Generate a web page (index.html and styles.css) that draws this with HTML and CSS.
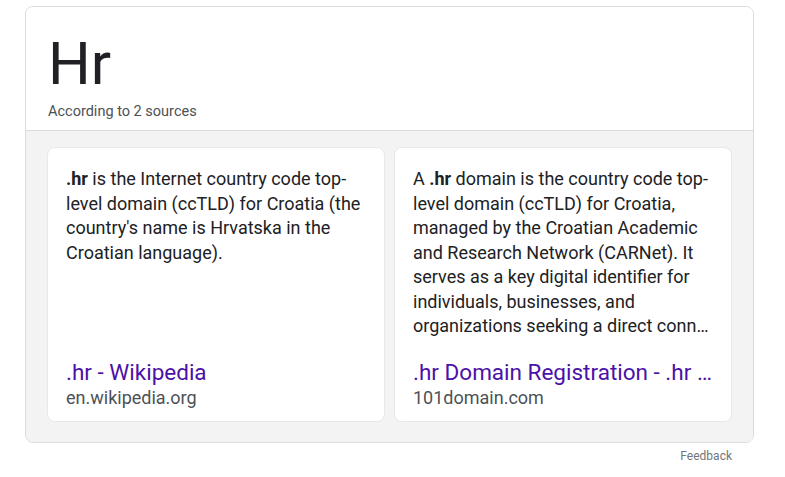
FILE: index.html
```html
<!DOCTYPE html>
<html>
<head>
<meta charset="utf-8">
<link rel="stylesheet" href="styles.css">
</head>
<body>
<div class="wrap">
  <div class="panel">
    <div class="head">
      <div class="title">Hr</div>
      <div class="sub">According to 2 sources</div>
    </div>
    <div class="cards">
      <div class="card">
        <div class="text"><b>.hr</b> is the Internet country code top-level domain (ccTLD) for Croatia (the country's name is Hrvatska in the Croatian language).</div>
        <div class="src">
          <a class="link" href="#">.hr - Wikipedia</a>
          <div class="domain">en.wikipedia.org</div>
        </div>
      </div>
      <div class="card">
        <div class="text">A <b>.hr</b> domain is the country code top-level domain (ccTLD) for Croatia, managed by the Croatian Academic and Research Network (CARNet). It serves as a key digital identifier for individuals, businesses, and organizations seeking a direct <span class="brk">connection to Croatia and its online community.</span></div>
        <div class="src">
          <a class="link" href="#">.hr Domain Registration - .hr Domain Registration and Pricing</a>
          <div class="domain">101domain.com</div>
        </div>
      </div>
    </div>
  </div>
  <div class="feedback">Feedback</div>
</div>
</body>
</html>
```
FILE: styles.css
```css
html, body {
  margin: 0;
  padding: 0;
  background: #fff;
  font-family: Roboto, "Liberation Sans", Arial, sans-serif;
}
.wrap {
  width: 729px;
  padding: 6px 0 0 25px;
}
.panel {
  border: 1px solid #dadce0;
  border-radius: 8px;
  overflow: hidden;
}
.head {
  background: #fff;
  padding: 20px 22px 7px 22px;
  border-bottom: 1px solid #dadce0;
}
.title {
  font-size: 60px;
  line-height: 74px;
  color: #202124;
}
.sub {
  font-size: 14.5px;
  line-height: 22px;
  color: #4d5156;
}
.cards {
  background: #f3f3f3;
  padding: 16px 21px 20px 21px;
  display: grid;
  grid-template-columns: minmax(0, 1fr) minmax(0, 1fr);
  gap: 9px;
}
.card {
  box-sizing: border-box;
  background: #fff;
  border: 1px solid #e8e8e8;
  border-radius: 8px;
  padding: 19px 18px 11px 18px;
  height: 275px;
  display: flex;
  flex-direction: column;
  justify-content: space-between;
  min-width: 0;
}
.text {
  font-size: 18px;
  line-height: 24.5px;
  color: #202124;
  display: -webkit-box;
  -webkit-line-clamp: 7;
  -webkit-box-orient: vertical;
  overflow: hidden;
}
.text b {
  font-weight: 700;
}
.brk {
  word-break: break-all;
}
.src {
  min-width: 0;
}
.link {
  display: block;
  font-size: 22.5px;
  line-height: 27px;
  color: #4b11a8;
  text-decoration: none;
  white-space: nowrap;
  overflow: hidden;
  text-overflow: ellipsis;
}
.domain {
  font-size: 18px;
  line-height: 24px;
  color: #4d5156;
}
.feedback {
  text-align: right;
  font-size: 12px;
  line-height: 16px;
  color: #70757a;
  padding: 5px 22px 0 0;
}
```
